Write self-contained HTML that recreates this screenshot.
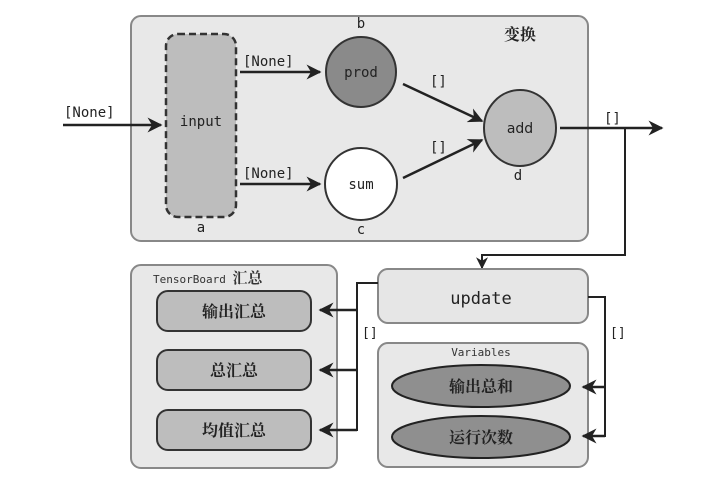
<!DOCTYPE html>
<html><head><meta charset="utf-8"><style>
html,body{margin:0;padding:0;background:#fff;}
svg{display:block}
.m{font-family:"DejaVu Sans Mono","Liberation Mono",monospace;}
.c{font-family:"Noto Serif CJK SC","Liberation Serif",serif;font-weight:bold;}
.a{font-family:"DejaVu Sans","Liberation Sans",sans-serif;}
</style></head><body>
<svg width="711" height="484" viewBox="0 0 711 484" xmlns="http://www.w3.org/2000/svg">
<defs>
<marker id="ar" viewBox="0 0 10 10" refX="9" refY="5" markerWidth="6" markerHeight="6" orient="auto-start-reverse">
<path d="M0,0 L10,5 L0,10 L3,5 Z" fill="#222"/></marker>
</defs>
<rect x="131" y="16" width="457" height="225" rx="10" fill="#e8e8e8" stroke="#888" stroke-width="2"/>
<rect x="166" y="34" width="70" height="183" rx="12" fill="#bdbdbd" stroke="#333" stroke-width="2.5" stroke-dasharray="7,4"/>
<text x="201" y="126" class="m" font-size="14" text-anchor="middle" fill="#222">input</text>
<text x="201" y="232" class="m" font-size="14" text-anchor="middle" fill="#222">a</text>
<circle cx="361" cy="72" r="35" fill="#8a8a8a" stroke="#333" stroke-width="2"/>
<text x="361" y="77" class="m" font-size="14" text-anchor="middle" fill="#222">prod</text>
<text x="361" y="28" class="m" font-size="14" text-anchor="middle" fill="#222">b</text>
<circle cx="361" cy="184" r="36" fill="#fff" stroke="#333" stroke-width="2"/>
<text x="361" y="189" class="m" font-size="14" text-anchor="middle" fill="#222">sum</text>
<text x="361" y="234" class="m" font-size="14" text-anchor="middle" fill="#222">c</text>
<ellipse cx="520" cy="128" rx="36" ry="38" fill="#bdbdbd" stroke="#333" stroke-width="2"/>
<text x="520" y="133" class="a" font-size="14" text-anchor="middle" fill="#222">add</text>
<text x="518" y="180" class="m" font-size="14" text-anchor="middle" fill="#222">d</text>
<text x="520" y="40" class="c" font-size="16" text-anchor="middle" fill="#222">变换</text>
<g stroke="#222" stroke-width="2.5" fill="none">
<line x1="63" y1="125" x2="161" y2="125" marker-end="url(#ar)"/>
<line x1="240" y1="72" x2="320" y2="72" marker-end="url(#ar)"/>
<line x1="240" y1="184" x2="320" y2="184" marker-end="url(#ar)"/>
<line x1="403" y1="84" x2="482" y2="121" marker-end="url(#ar)"/>
<line x1="403" y1="178" x2="482" y2="140" marker-end="url(#ar)"/>
<line x1="560" y1="128" x2="662" y2="128" marker-end="url(#ar)"/>
<polyline points="625,128 625,255 482,255 482,268" marker-end="url(#ar)" stroke-width="2"/>
</g>
<g class="m" font-size="14" fill="#222">
<text x="64" y="117">[None]</text>
<text x="243" y="66">[None]</text>
<text x="243" y="178">[None]</text>
<text x="430" y="86">[]</text>
<text x="430" y="152">[]</text>
<text x="604" y="123">[]</text>
</g>
<rect x="131" y="265" width="206" height="203" rx="10" fill="#e8e8e8" stroke="#888" stroke-width="2"/>
<text x="153" y="283" class="m" font-size="11" fill="#333">TensorBoard <tspan class="c" font-size="15">汇总</tspan></text>
<g fill="#bdbdbd" stroke="#333" stroke-width="2">
<rect x="157" y="291" width="154" height="40" rx="11"/>
<rect x="157" y="350" width="154" height="40" rx="11"/>
<rect x="157" y="410" width="154" height="40" rx="11"/>
</g>
<g class="c" font-size="16" fill="#222" text-anchor="middle">
<text x="234" y="317">输出汇总</text>
<text x="234" y="376">总汇总</text>
<text x="234" y="436">均值汇总</text>
</g>
<rect x="378" y="269" width="210" height="54" rx="10" fill="#e6e6e6" stroke="#888" stroke-width="2"/>
<text x="481" y="304" class="m" font-size="17" text-anchor="middle" fill="#222">update</text>
<rect x="378" y="343" width="210" height="124" rx="10" fill="#e8e8e8" stroke="#888" stroke-width="2"/>
<text x="481" y="356" class="m" font-size="11" text-anchor="middle" fill="#333">Variables</text>
<g fill="#8f8f8f" stroke="#222" stroke-width="2">
<ellipse cx="481" cy="386" rx="89" ry="21"/>
<ellipse cx="481" cy="437" rx="89" ry="21"/>
</g>
<g class="c" font-size="16" fill="#222" text-anchor="middle">
<text x="481" y="392">输出总和</text>
<text x="481" y="443">运行次数</text>
</g>
<g stroke="#222" stroke-width="2.5" fill="none">
<polyline points="378,283 357,283 357,431" stroke-width="2"/>
<line x1="357" y1="310" x2="320" y2="310" marker-end="url(#ar)"/>
<line x1="357" y1="370" x2="320" y2="370" marker-end="url(#ar)"/>
<line x1="357" y1="430" x2="320" y2="430" marker-end="url(#ar)"/>
<polyline points="588,297 605,297 605,437" stroke-width="2"/>
<line x1="605" y1="387" x2="583" y2="387" marker-end="url(#ar)"/>
<line x1="605" y1="436" x2="583" y2="436" marker-end="url(#ar)"/>
</g>
<g class="m" font-size="13" fill="#222">
<text x="362" y="337">[]</text>
<text x="610" y="337">[]</text>
</g>
</svg>
</body></html>
